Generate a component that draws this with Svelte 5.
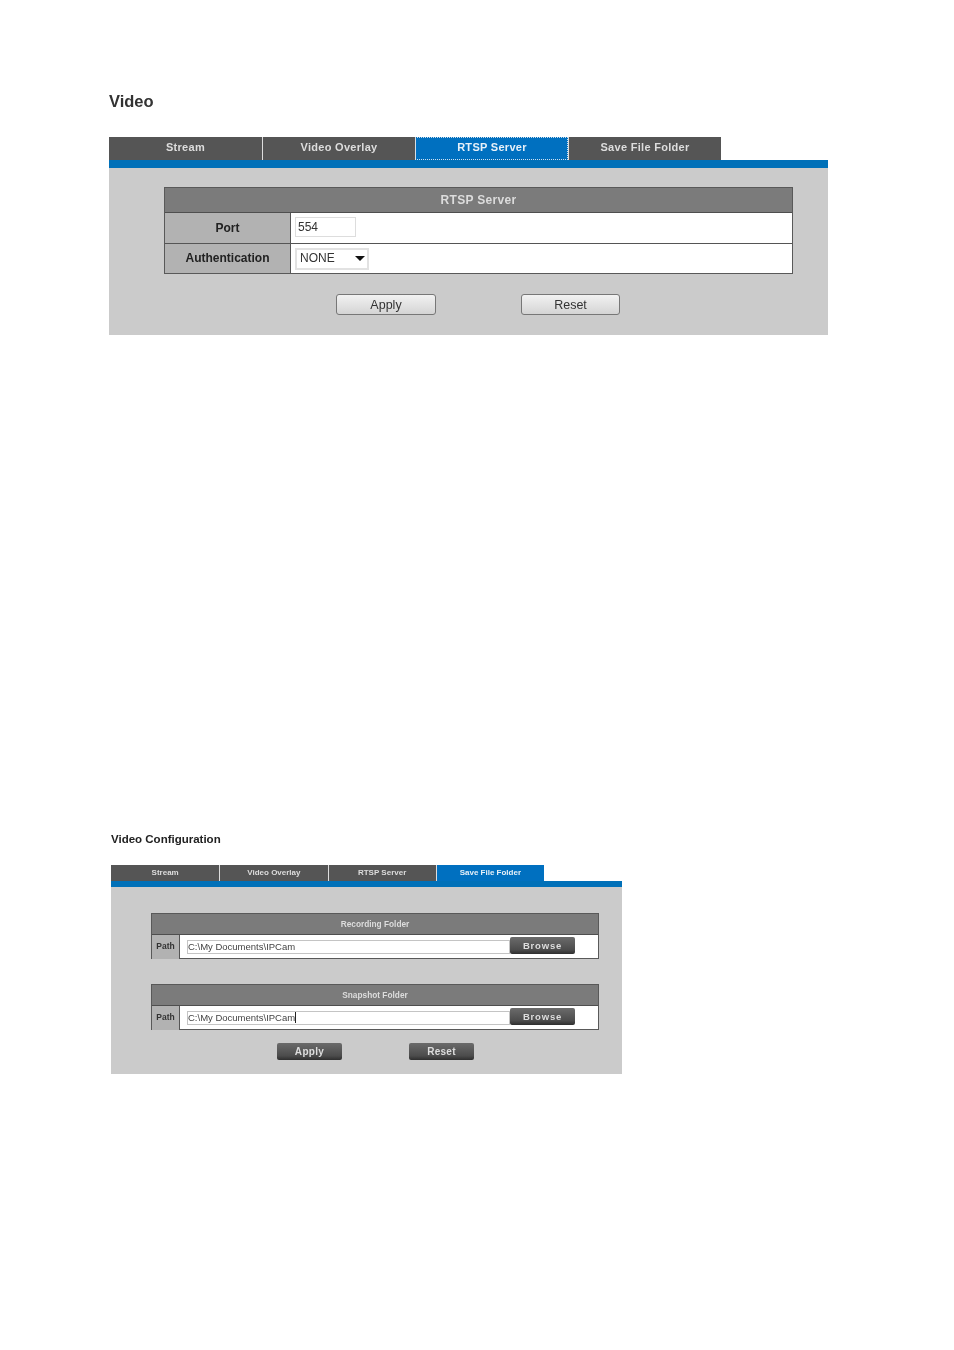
<script>
  const topTabs = ['Stream', 'Video Overlay', 'RTSP Server', 'Save File Folder'];
  const folders = [
    { title: 'Recording Folder', path: 'C:\\My Documents\\IPCam', caret: false },
    { title: 'Snapshot Folder', path: 'C:\\My Documents\\IPCam', caret: true },
  ];
</script>

<main>
  <section class="rtsp">
    <h1>Video</h1>
    <div class="tabs">
      {#each topTabs as tab, i}
        <div class="tab" class:active={i === 2}>{tab}</div>
      {/each}
    </div>
    <div class="bar"></div>
    <div class="panel">
      <div class="table">
        <div class="head">RTSP Server</div>
        <div class="row port">
          <div class="label">Port</div>
          <div class="cell"><span class="field">554</span></div>
        </div>
        <div class="row auth">
          <div class="label">Authentication</div>
          <div class="cell">
            <span class="select">NONE<i class="arrow"></i></span>
          </div>
        </div>
      </div>
      <div class="actions">
        <button>Apply</button>
        <button>Reset</button>
      </div>
    </div>
  </section>

  <section class="config">
    <h2>Video Configuration</h2>
    <div class="tabs">
      {#each topTabs as tab, i}
        <div class="tab" class:active={i === 3}>{tab}</div>
      {/each}
    </div>
    <div class="bar"></div>
    <div class="panel">
      {#each folders as folder}
        <div class="table">
          <div class="head">{folder.title}</div>
          <div class="row">
            <div class="label">Path</div>
            <div class="cell">
              <span class="field">{folder.path}{#if folder.caret}<i class="caret"></i>{/if}</span>
              <button class="dark browse">Browse</button>
            </div>
          </div>
        </div>
      {/each}
      <div class="actions">
        <button class="dark">Apply</button>
        <button class="dark">Reset</button>
      </div>
    </div>
  </section>
</main>

<style>
  :global(body) {
    background: #fff;
  }

  main {
    height: 1350px;
    overflow: hidden;
    font-family: "Liberation Sans", Arial, sans-serif;
    filter: blur(0.4px);
  }

  h1 {
    height: 22px;
    margin: 0 0 25px;
    font-size: 16.5px;
    line-height: 22px;
    color: #333;
  }

  h2 {
    height: 18px;
    margin: 0 0 17px;
    font-size: 11.5px;
    line-height: 18px;
    color: #222;
  }

  .tabs {
    display: flex;
  }

  .tab {
    box-sizing: border-box;
    background: #555;
    color: #ddd;
    font-weight: bold;
    text-align: center;
    border-left: 1px solid #ddd;
  }

  .tab:first-child {
    border-left: 0;
  }

  .tab.active {
    background: #0070c0;
    color: #e6f0f8;
  }

  .bar {
    background: #0070b8;
  }

  .panel {
    background: #cbcbcb;
  }

  .table {
    box-sizing: border-box;
    background: #fff;
    border-style: solid;
    border-color: #595959;
  }

  .head {
    box-sizing: border-box;
    background: #7b7b7b;
    color: #dcdcdc;
    font-weight: bold;
    text-align: center;
    border-bottom: 1px solid #4e4e4e;
  }

  .row {
    display: flex;
  }

  .label {
    box-sizing: border-box;
    background: #b2b2b2;
    color: #222;
    font-weight: bold;
    text-align: center;
    border-right: 1px solid #555;
  }

  .cell {
    flex: 1;
    display: flex;
    align-items: center;
    min-width: 0;
  }

  .actions {
    display: flex;
  }

  button {
    box-sizing: border-box;
    padding: 0;
    font-family: inherit;
    cursor: pointer;
  }

  /* first panel */
  .rtsp {
    width: 719px;
    margin-left: 109px;
    padding-top: 90px;
  }

  .rtsp .tab {
    width: 153px;
    height: 23px;
    font-size: 11px;
    line-height: 21px;
    letter-spacing: 0.3px;
  }

  .rtsp .tab.active {
    outline: 1px dotted #cfe0ee;
    outline-offset: -1px;
  }

  .rtsp .bar {
    height: 8px;
  }

  .rtsp .panel {
    height: 167px;
    padding: 19px 35px 0 55px;
    box-sizing: border-box;
  }

  .rtsp .table {
    width: 629px;
    border-width: 1px;
  }

  .rtsp .head {
    height: 25px;
    font-size: 12px;
    line-height: 24px;
    letter-spacing: 0.3px;
  }

  .rtsp .row {
    height: 31px;
    border-bottom: 1px solid #555;
    box-sizing: border-box;
  }

  .rtsp .row.auth {
    height: 29px;
    border-bottom: 0;
  }

  .rtsp .label {
    width: 126px;
    font-size: 12px;
    line-height: 30px;
  }

  .rtsp .auth .label {
    line-height: 29px;
  }

  .rtsp .cell {
    padding-left: 4px;
  }

  .rtsp .field,
  .select {
    box-sizing: border-box;
    height: 20px;
    background: #fff;
    border: 1px solid #ddd;
    color: #333;
    font-size: 12px;
    line-height: 19px;
  }

  .rtsp .field {
    width: 61px;
    margin-bottom: 2px;
    padding-left: 2px;
  }

  .select {
    position: relative;
    width: 74px;
    height: 22px;
    padding-left: 3px;
    border: 2px solid #e2e2e2;
    line-height: 16px;
  }

  .arrow {
    position: absolute;
    top: 6px;
    right: 2px;
    border-style: solid;
    border-width: 5px 5px 0;
    border-color: #111 transparent transparent;
  }

  .rtsp .actions {
    margin: 20px 0 0 172px;
    gap: 85px;
  }

  .rtsp button {
    width: 100px;
    height: 21px;
    padding-top: 1px;
    border: 1px solid #777;
    border-radius: 3px;
    background: linear-gradient(#f2f2f2, #d4d4d4);
    color: #333;
    font-size: 12.5px;
    line-height: 19px;
  }

  .rtsp button + button {
    width: 99px;
  }

  /* second panel */
  .config {
    width: 511px;
    margin-left: 111px;
    margin-top: 495px;
  }

  .config .tab {
    width: 108.25px;
    height: 16px;
    font-size: 8px;
    line-height: 16px;
  }

  .config .bar {
    height: 6px;
  }

  .config .panel {
    height: 187px;
    padding: 26px 23px 0 40px;
    box-sizing: border-box;
  }

  .config .table {
    width: 448px;
    height: 46px;
    margin-bottom: 25px;
    border-width: 1px;
  }

  .config .head {
    height: 21px;
    font-size: 8.3px;
    line-height: 20px;
    color: #ddd;
  }

  .config .row {
    height: 24px;
  }

  .config .label {
    width: 28px;
    font-size: 8.5px;
    line-height: 22px;
    color: #333;
  }

  .config .cell {
    padding-left: 7px;
  }

  .config .field {
    box-sizing: border-box;
    width: 323px;
    height: 14px;
    border: 1px solid #c4c4c4;
    color: #444;
    font-size: 9.5px;
    line-height: 12px;
  }

  .caret {
    display: inline-block;
    width: 1px;
    height: 11px;
    background: #222;
    vertical-align: -2px;
  }

  .dark {
    border: 0;
    border-radius: 2px;
    background: linear-gradient(#6b6b6b, #4c4c4c 75%, #2e2e2e);
    color: #ddd;
    font-weight: bold;
  }

  .browse {
    width: 65px;
    height: 17px;
    margin-bottom: 3px;
    font-size: 9.5px;
    letter-spacing: 0.8px;
  }

  .config .actions {
    margin: -12px 0 0 126px;
    gap: 67px;
  }

  .config .actions button {
    width: 65px;
    height: 17px;
    font-size: 10px;
    letter-spacing: 0.3px;
  }
</style>
